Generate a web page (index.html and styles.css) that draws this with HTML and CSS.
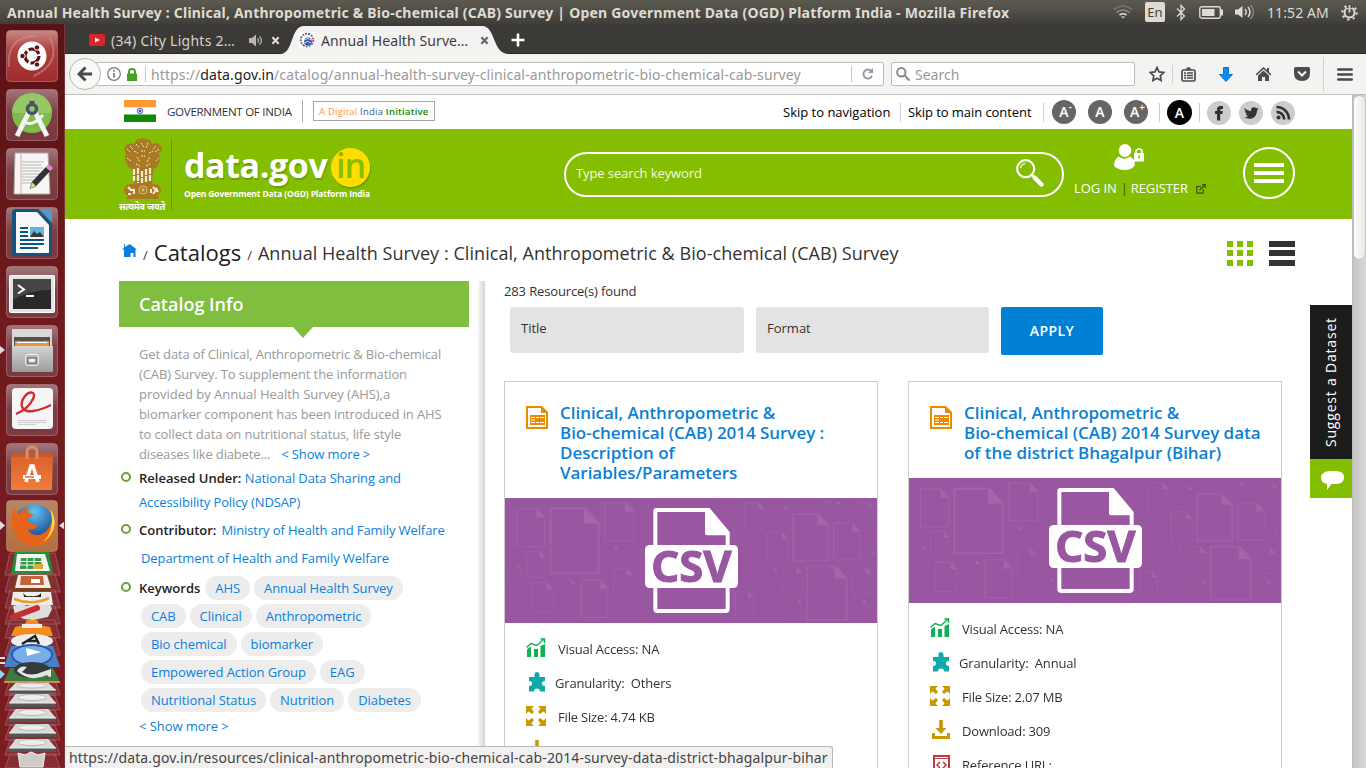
FILE: index.html
```html
<!DOCTYPE html>
<html lang="en">
<head>
<meta charset="utf-8">
<title>Annual Health Survey : Clinical, Anthropometric &amp; Bio-chemical (CAB) Survey</title>
<link rel="stylesheet" href="styles.css">
</head>
<body>
<svg class="defs" width="0" height="0">
  <defs>
    <linearGradient id="tile" x1="0" y1="0" x2="0" y2="1"><stop offset="0" stop-color="#a3777b"/><stop offset=".45" stop-color="#7d3f45"/><stop offset="1" stop-color="#7b3940"/></linearGradient>
    <linearGradient id="red" x1="0" y1="0" x2="0" y2="1"><stop offset="0" stop-color="#c98884"/><stop offset=".4" stop-color="#a9403e"/><stop offset="1" stop-color="#a12b2d"/></linearGradient>
    <linearGradient id="orange" x1="0" y1="0" x2="0" y2="1"><stop offset="0" stop-color="#d9602b"/><stop offset="1" stop-color="#ee7d3c"/></linearGradient>
    <linearGradient id="steel" x1="0" y1="0" x2="0" y2="1"><stop offset="0" stop-color="#d4d4d2"/><stop offset="1" stop-color="#9b9b99"/></linearGradient>
    <linearGradient id="fox" x1="0" y1="0" x2="0" y2="1"><stop offset="0" stop-color="#b98662"/><stop offset="1" stop-color="#b3703f"/></linearGradient>
    <radialGradient id="globe" cx=".5" cy=".2" r=".7"><stop offset="0" stop-color="#63c6f0"/><stop offset="1" stop-color="#153f8c"/></radialGradient>
    <symbol id="sheet" viewBox="0 0 90 120" preserveAspectRatio="none"><path d="M2 2h62l24 26v90H2z" fill="none" stroke="#a76bb0" stroke-width="3"/><path d="M62 2v27h27z" fill="#a76bb0"/></symbol>
    <symbol id="banner" viewBox="45 384 1119 375">
      <g opacity=".8">
      <use href="#sheet" x="78" y="414" width="89" height="119"/><use href="#sheet" x="178" y="412" width="151" height="201"/><use href="#sheet" x="343" y="397" width="91" height="118"/><use href="#sheet" x="346" y="526" width="40" height="52"/><use href="#sheet" x="55" y="583" width="43" height="61"/><use href="#sheet" x="109" y="543" width="58" height="80"/><use href="#sheet" x="124" y="636" width="67" height="91"/><use href="#sheet" x="213" y="628" width="45" height="61"/><use href="#sheet" x="271" y="628" width="85" height="118"/><use href="#sheet" x="370" y="595" width="58" height="82"/><use href="#sheet" x="448" y="682" width="32" height="40"/><use href="#sheet" x="735" y="664" width="56" height="74"/><use href="#sheet" x="763" y="397" width="61" height="85"/><use href="#sheet" x="856" y="405" width="40" height="56"/><use href="#sheet" x="829" y="484" width="67" height="94"/><use href="#sheet" x="907" y="430" width="110" height="145"/><use href="#sheet" x="1012" y="391" width="40" height="55"/><use href="#sheet" x="1104" y="397" width="47" height="64"/><use href="#sheet" x="1030" y="457" width="83" height="115"/><use href="#sheet" x="1123" y="541" width="32" height="43"/><use href="#sheet" x="831" y="591" width="32" height="41"/><use href="#sheet" x="877" y="589" width="61" height="85"/><use href="#sheet" x="948" y="587" width="125" height="165"/><use href="#sheet" x="1086" y="591" width="59" height="80"/><use href="#sheet" x="895" y="687" width="43" height="59"/><use href="#sheet" x="1089" y="687" width="44" height="62"/>
      </g>
      <path d="M499 420h157l57 68v228q0 7-7 7H503q-7 0-7-7V424q0-4 3-4z" fill="#9857a0" stroke="#fff" stroke-width="12"/>
      <path d="M645 416h12l61 72v8h-67q-6 0-6-6z" fill="#fff"/>
      <rect x="465" y="525" width="279" height="129" rx="14" fill="#fff"/>
    </symbol>
    <symbol id="i-doc" viewBox="0 0 22 23"><path d="M1 1h14.500l5.500 5.500V22H1z" fill="#fff" stroke="#ea8a00" stroke-width="2"/><path d="M15 0l7 7h-7zM4 9h15v10H4z" fill="#ea8a00"/><path d="M5 11.500h4M10 11.500h3M14 11.500h4M5 14h4M5 16.500h4M10 16.500h3M14 16.500h4" stroke="#fff"/></symbol>
    <symbol id="i-chart" viewBox="0 0 20 19"><path d="M1 11.500l3-2.500h1v10H1zM8 11h4v8H8zM14.500 8L19 6v13h-4.500z" fill="#11b056"/><path d="M.5 9.500l4.500-4 6 2 6.500-6M14.500 1h4v4" fill="none" stroke="#11b056" stroke-width="1.400"/></symbol>
    <symbol id="i-puzzle" viewBox="0 0 18 20"><path d="M1 5h5.500V2.500a2.500 2.500 0 0 1 5 0V5H17v4.200a2.400 2.400 0 1 0 0 4.600V19.500h-5a3 3 0 1 0-6 0H1v-5.700a2.400 2.400 0 1 0 0-4.600z" fill="#0eaaa9"/></symbol>
    <symbol id="i-expand" viewBox="0 0 20 20"><path d="M0 0h8L5.500 2.500 8 6 6 8 2.500 5.500 0 8zM20 0h-8l2.500 2.500L12 6l2 2 3.500-2.500L20 8zM0 20h8l-2.500-2.500L8 14l-2-2-3.500 2.500L0 12zM20 20h-8l2.500-2.500L12 14l2-2 3.500 2.500L20 12z" fill="#c79a00"/></symbol>
    <symbol id="i-down" viewBox="0 0 18 19"><path d="M7.200 0h3.600v8h3.700L9 14 3.500 8h3.700zM0 13h3v3h12v-3h3v6H0z" fill="#c79a00"/></symbol>
    <symbol id="i-code" viewBox="0 0 17 18"><path d="M1 1h15v16H1z" fill="none" stroke="#b93a3f" stroke-width="2"/><path d="M1 3.500h15" stroke="#b93a3f"/><path d="M7 7l-3 3 3 3M10 7l3 3-3 3" fill="none" stroke="#b93a3f" stroke-width="1.500"/></symbol>
    <symbol id="i-x" viewBox="0 0 10 10"><path d="M1.500 1.500l7 7M8.500 1.500l-7 7" stroke="currentColor" stroke-width="2.400"/></symbol>
    <symbol id="disk" viewBox="0 0 50 15" preserveAspectRatio="none"><path d="M8 1h34l8 9v4H1v-4z" fill="#d9d9d9"/><path d="M1 10h49v4H1z" fill="#555"/><path d="M1 10h49" stroke="#f5f5f5"/><ellipse cx="25" cy="4.500" rx="15" ry="3" fill="#eee" stroke="#b9b9b9"/></symbol>
  </defs>
</svg>

<header class="panel">
  <span class="panel-title">Annual Health Survey : Clinical, Anthropometric &amp; Bio-chemical (CAB) Survey | Open Government Data (OGD) Platform India - Mozilla Firefox</span>
  <div class="tray">
    <svg class="t-wifi" width="20" height="14" viewBox="0 0 20 14" fill="none" stroke-width="1.700"><path d="M.8 4.500q9.200-7 18.400 0" stroke="#77756c"/><path d="M3.500 7.500q6.500-5 13 0" stroke="#8f8d83"/><path d="M6.500 10q3.500-2.500 7 0" stroke="#dfdbd2"/><path d="M8 11.500h4l-2 2z" fill="#dfdbd2"/></svg>
    <span class="t-lang">En</span>
    <svg class="t-bt" width="10" height="17" viewBox="0 0 10 17" fill="none" stroke="#dfdbd2" stroke-width="1.300"><path d="M1 4.500l7.500 7.500L5 15.500V1.500L8.500 5 1 12.500"/></svg>
    <svg class="t-bat" width="25" height="13" viewBox="0 0 25 13"><rect x=".8" y=".8" width="20.500" height="11.400" rx="2" fill="none" stroke="#dfdbd2" stroke-width="1.400"/><path d="M3 3h12.500v7H3zM22 3.500h2v6h-2z" fill="#dfdbd2"/></svg>
    <svg class="t-vol" width="20" height="16" viewBox="0 0 20 16" fill="none"><path d="M0 5.500h3L7.500 2v12L3 10.500H0z" fill="#dfdbd2"/><path d="M10 5q2.500 3 0 6M13 3q4 5 0 10" stroke="#dfdbd2" stroke-width="1.500"/><path d="M15.500 1q6 7 0 14" stroke="#85837a" stroke-width="1.500"/></svg>
    <span class="t-time">11:52 AM</span>
    <svg class="t-gear" width="17" height="17" viewBox="0 0 17 17" fill="none" stroke="#dfdbd2"><circle cx="8.500" cy="8.500" r="5" stroke-width="2"/><circle cx="8.500" cy="8.500" r="7.200" stroke-width="2" stroke-dasharray="2.300 3.350"/><path d="M8.500 0v4" stroke="#4a483f" stroke-width="5"/><path d="M8.500 1v7.500" stroke-width="1.800"/></svg>
  </div>
</header>

<div class="desktop">
<nav class="launcher">
  <svg width="65" height="744" viewBox="0 24 65 744">
    <g stroke="#b98c8f" stroke-opacity=".55">
      <rect x="6.500" y="30.500" width="51" height="51" rx="4" fill="url(#red)"/>
      <g fill="url(#tile)"><rect x="6.500" y="89.500" width="51" height="51" rx="4"/><rect x="6.500" y="148.500" width="51" height="51" rx="4"/><rect x="6.500" y="207.500" width="51" height="51" rx="4"/><rect x="6.500" y="266.500" width="51" height="51" rx="4"/><rect x="6.500" y="325.500" width="51" height="51" rx="4"/><rect x="6.500" y="384.500" width="51" height="51" rx="4"/><rect x="6.500" y="443.500" width="51" height="51" rx="4"/></g>
      <rect x="6.500" y="500.500" width="51" height="51" rx="4" fill="url(#fox)"/>
    </g>
    <!-- Dash -->
    <path d="M9 67Q6 36 37 36M50 38Q62 62 34 76" fill="none" stroke="#d38b89" stroke-width="2" opacity=".6"/>
    <circle cx="32" cy="56" r="14.500" fill="#fff"/><circle cx="32" cy="56" r="7" fill="none" stroke="#5e1216" stroke-width="3.200" stroke-dasharray="12.400 2.260"/><g fill="#5e1216" stroke="#fff"><circle cx="22.500" cy="56" r="2.700"/><circle cx="37" cy="47.500" r="2.700"/><circle cx="37" cy="64.500" r="2.700"/></g>
    <!-- Android Studio -->
    <circle cx="32" cy="113" r="20" fill="#7fba4c"/><path d="M12 113a20 20 0 0 1 40 0z" fill="#93c864"/><path d="M29 112L17 136M35 112l12 24" stroke="#f3f3f3" stroke-width="5"/><path d="M22 121q10 7 21-6" stroke="#f3f3f3" stroke-width="3" fill="none"/><circle cx="32" cy="109" r="4.500" fill="none" stroke="#4c5565" stroke-width="3.500"/><path d="M32 101v5" stroke="#4c5565" stroke-width="5"/>
    <!-- Text editor -->
    <path d="M15 153h33l2 41H14z" fill="#f6f6f4" stroke="#aaa"/><path d="M21 154v40" stroke="#e6a2a2"/><path d="M22 162h22M22 165h20M22 168h21M22 171h18M22 174h21M22 177h15M22 180h14M22 183h10" stroke="#a9aaae" stroke-width=".8"/><path d="M34 184L48 169" stroke="#333" stroke-width="6"/><path d="M48 169l3-3" stroke="#d58bc7" stroke-width="6"/><path d="M36 186l-6 2.500 2-6.500z" fill="#efd779" stroke="#333" stroke-width=".5"/>
    <!-- Writer -->
    <path d="M16 209h22l14 14v30q0 3-3 3H15q-3 0-3-3V213q0-4 4-4z" fill="#14527f"/><path d="M40 209h12v14z" fill="#4b9bcc"/><path d="M16 212h21l12 13v28H16z" fill="#f8f8f8"/><path d="M20 228h8M20 232h8M20 236h8M20 240h24M20 244h24M20 248h18" stroke="#0c5480" stroke-width="2"/><path d="M30 227h14v10H30z" fill="#65b4e0"/><path d="M30 237l4-6 3 3 3-2 4 5z" fill="#3b3b33"/>
    <!-- Terminal -->
    <rect x="9.500" y="275.500" width="45" height="37" rx="1" fill="#e4e4e2" stroke="#fff"/><rect x="13" y="279" width="38" height="30" fill="#292929"/><path d="M13 279h38v11q-19-1-38 10z" fill="#454545"/><path d="M18 285l6 4.500-6 4M26 296h8" fill="none" stroke="#fff" stroke-width="2"/>
    <!-- Files -->
    <path d="M12 329h40v38H12z" fill="#d8d8d6"/><path d="M14 337h36v10H14z" fill="#55514d"/><path d="M15 341h34v6H15z" fill="#e59747"/><path d="M17 342.500h30" stroke="#fff"/><path d="M12 346h41v26H12z" fill="url(#steel)"/><rect x="25.500" y="354.500" width="13" height="11" rx="2" fill="none" stroke="#eee"/><rect x="28" y="358" width="8" height="5" fill="#eee" stroke="#555"/>
    <!-- PDF viewer -->
    <rect x="12" y="388" width="41" height="41" rx="4" fill="#f5f5f5"/><path d="M16 414q12-5 17-15c4-8-4-8-8-3-6 8-4 17 8 15q8-1 18-6" fill="none" stroke="#cf2b31" stroke-width="2.400"/><path d="M18 420.500h28M18 422.500h28M18 424.500h18" stroke="#ccc"/>
    <!-- Software centre -->
    <path d="M11 453h42l-1 37H11z" fill="url(#orange)"/><path d="M11 453h42v4H11z" fill="#cc5625"/><path d="M27 459v-7q0-5 5-5t5 5v7" fill="none" stroke="#e58a5c" stroke-width="3"/><path d="M26 482l5-16h2l5 16" fill="none" stroke="#fff" stroke-width="3.500"/><path d="M23 477h18" stroke="#fff" stroke-width="4"/><path d="M25 477h9" stroke="#e86f35" stroke-width="1.500"/>
    <!-- Firefox -->
    <circle cx="34" cy="524" r="20" fill="url(#globe)"/><path d="M12 514c-3 16 7 32 23 32 14 0 23-12 18-28-3 10-8 17-16 17-6 0-9-4-9-6 5 1 8 0 9-3-3-3-8-1-9-6 0-3 3-3 6-5l-7-3 3-4c-7 0-9 4-11 6-2-1-3-3-3-5-2 1-3 3-4 5z" fill="#e9641b"/><path d="M50 509c9 12 4 27-7 33q13-13 7-33z" fill="#ffd546"/>
    <path d="M0 346l5 4-5 4zM0 521l5 4.500-5 4.500zM65 521l-6 4.500 6 4.500z" fill="#ddd"/>
    <!-- Folded icons -->
    <g fill="#8f3d43" fill-opacity=".55" stroke="#aa686c" stroke-width=".7"><path d="M10 553h45l5 22H5zM10 574h45l5 18H5zM10 590h45l5 18H5zM10 606h45l5 18H5zM10 620h45l5 18H5zM10 638h45l5 17H5zM10 680h45l5 15H5zM10 695h45l5 15H5zM10 710h45l5 15H5zM10 725h45l5 15H5zM10 740h45l5 15H5zM10 754h45l5 14H5z"/></g>
    <path d="M15 552h34l4 22H11z" fill="#1f9136"/><path d="M17 554h28l5 17H15z" fill="#f4f4f4"/><path d="M21 558h20l1 11H20z" fill="#2f9d41"/><path d="M20 561.500h22M20 565h22M27 558v11M34 558v11" stroke="#fff"/><path d="M34 564h9v5h-9z" fill="#e2a73f"/>
    <path d="M16 575h33l4 16H12z" fill="#7d3f1c"/><path d="M18 575h29l4 13H15z" fill="#f1ece6"/><path d="M21 576h22l1 9H20z" fill="#c5623a"/><path d="M31 579h9v4h-9z" fill="#fff"/>
    <path d="M13 592h38l2 13H11z" fill="#eee"/><path d="M23 592q1 5 8 4 7 1 10-3v4H24z" fill="#222"/><path d="M14 599q18 7 35-1" stroke="#f19b2d" stroke-width="2.500" fill="none"/>
    <path d="M13 606l8-2 6 2 8-3 6 2 9-1 2 5-4 8-15 3-9-1-9-4z" fill="#ddd"/><path d="M13 617l24-9" stroke="#c42f36" stroke-width="6" stroke-linecap="round"/>
    <path d="M27 620h10l3 5 10 2 3 9H11l4-9 9-2z" fill="#f58c20"/><path d="M22 624h20v4H22z" fill="#eee"/>
    <ellipse cx="32" cy="641" rx="21" ry="7" fill="#eee"/><path d="M22 644l13-8 4 8M27 641h10" fill="none" stroke="#222" stroke-width="2.500"/>
    <path d="M11 646h42l7 21H4z" fill="#4b7fc3"/><ellipse cx="32" cy="655" rx="20" ry="10" fill="#78aee8" stroke="#2959a7" stroke-width="2"/><path d="M26 648l15 4-14 4z" fill="#fff"/>
    <path d="M10 668h43l7 14H4z" fill="#3f7a3c"/><path d="M4 682h56" stroke="#e6a45e" stroke-width="1.500"/><ellipse cx="32" cy="670" rx="18" ry="8" fill="#353b3b"/><path d="M17 671q3-6 10-4l-5 5q9 5 20 0l9-3v8q-3 0-4-2-17 8-30-4z" fill="#e3e6e5"/><path d="M0 657h5v2H0zM0 662h5v2H0z" fill="#ddd"/><path d="M0 670l5 4-5 5z" fill="#8ed7f4"/>
    <use href="#disk" x="8" y="682" width="48" height="12"/><use href="#disk" x="8" y="693" width="48" height="15"/><use href="#disk" x="8" y="708" width="48" height="15"/><use href="#disk" x="8" y="723" width="48" height="15"/><use href="#disk" x="8" y="738" width="48" height="15"/>
    <path d="M18 753l7 2 6-3 7 3 7-2-2 14H20z" fill="#cecccb" stroke="#eee"/>
  </svg>
</nav>

<div class="browser">
  <div class="tabs">
    <div class="tab tab-back">
      <svg width="16" height="12" viewBox="0 0 16 12"><rect width="16" height="12" rx="2" fill="#d9252a"/><path d="M6 3.500l5 2.500-5 2.500z" fill="#fff"/></svg>
      <span class="tab-label label-city">(34) City Lights 2…</span>
      <svg class="tab-sound" width="14" height="13" viewBox="0 0 14 13" fill="none" stroke="#b8b6af" stroke-width="1.200"><path d="M0 4h3l4-3.500v12L3 9H0z" fill="#b8b6af" stroke="none"/><path d="M8.500 4.500q2 2 0 4M10.500 2.500q4 4 0 8"/></svg>
      <svg class="tab-x" width="9" height="9"><use href="#i-x"/></svg>
    </div>
    <div class="tab tab-active">
      <svg class="tab-shape" width="229" height="30" viewBox="0 0 229 30"><path d="M0 30c14 0 10-28 24-28h178c14 0 10 28 27 28z" fill="#f4f3f1"/></svg>
      <svg class="tab-fav" width="16" height="16" viewBox="0 0 16 16"><rect width="16" height="16" fill="#fff"/><circle cx="9" cy="9.500" r="4" fill="#355c9e"/><path d="M5 8q4-3 8 0M5 11q4-3 7 0" stroke="#cfe0f2" fill="none"/><g fill="none" stroke-width="2"><circle cx="8" cy="8" r="6.300" stroke="#e0348e" stroke-dasharray="2 7"/><circle cx="8" cy="8" r="6.300" stroke="#39aa53" stroke-dasharray="2 7" stroke-dashoffset="3"/><circle cx="8" cy="8" r="6.300" stroke="#2979ba" stroke-dasharray="2 7" stroke-dashoffset="6"/></g></svg>
      <span class="tab-label label-annual">Annual Health Surve…</span>
      <svg class="tab-x" width="9" height="9"><use href="#i-x"/></svg>
    </div>
    <svg class="tab-new" width="14" height="14" viewBox="0 0 14 14"><path d="M7 .5v13M.5 7h13" stroke="#fff" stroke-width="2.600"/></svg>
  </div>

  <div class="toolbar">
    <div class="back"><svg width="16" height="16" viewBox="0 0 16 16" fill="none" stroke="#4a4a4a" stroke-width="3"><path d="M15 8H3M8.500 1.500L2 8l6.500 6.500"/></svg></div>
    <div class="urlbar">
      <svg width="14" height="14" viewBox="0 0 14 14" fill="none" stroke="#777"><circle cx="7" cy="7" r="6.300" stroke-width="1.200"/><path d="M7 6v4.500" stroke-width="1.700"/><path d="M7 3v1.700" stroke-width="1.700"/></svg>
      <svg class="lock" width="10" height="13" viewBox="0 0 10 13"><path d="M0 5.500h10V13H0z" fill="#47a127"/><path d="M2 6V4q0-3 3-3t3 3v2" fill="none" stroke="#47a127" stroke-width="2"/></svg>
      <i class="url-sep"></i>
      <span class="url">https://<b>data.gov.in</b>/catalog/annual-health-survey-clinical-anthropometric-bio-chemical-cab-survey</span>
      <i class="url-sep"></i>
      <svg class="reload" width="12" height="12" viewBox="0 0 12 12" fill="none" stroke="#8f979f" stroke-width="1.900"><path d="M9.500 3.200A4.500 4.500 0 1 0 10 8"/><path d="M11 0v5H6z" fill="#8f979f" stroke="none"/></svg>
    </div>
    <div class="searchbar">
      <svg width="14" height="14" viewBox="0 0 14 14" fill="none" stroke="#8b8b8b" stroke-width="2"><circle cx="5.300" cy="5.300" r="4.200"/><path d="M8.500 8.500l5 5"/></svg>
      <span>Search</span>
    </div>
    <div class="tools">
      <svg width="16" height="16" viewBox="0 0 16 16"><path d="M8 1.500l2 4.400 4.700.6-3.400 3.300.8 4.700L8 12.200l-4.100 2.300.8-4.700L1.300 6.500 6 5.900z" fill="none" stroke="#4c4c4c" stroke-width="1.700"/></svg>
      <i class="tool-sep"></i>
      <svg width="15" height="15" viewBox="0 0 15 15" fill="none" stroke="#4c4c4c"><rect x="1" y="3" width="13" height="11" rx="1.500" stroke-width="1.700"/><path d="M5 2.500L7.500 0 10 2.500z" fill="#4c4c4c"/><path d="M3 6h2M6 6h6M3 8.500h2M6 8.500h6M3 11h2M6 11h6" stroke-width="1.300"/></svg>
      <svg class="g1" width="14" height="15" viewBox="0 0 14 15"><path d="M4.500.5h5v7h4L7 14.500.5 7.500h4z" fill="#0d8df5" stroke="#0a72d0"/></svg>
      <svg class="g2" width="15" height="15" viewBox="0 0 15 15"><path d="M0 8l7.500-7L15 8" fill="none" stroke="#4c4c4c" stroke-width="1.600"/><path d="M7.500 3.500L13 8.500V14H9v-4H6v4H2V8.500zM11 1h2v4h-2z" fill="#4c4c4c"/></svg>
      <svg class="g2" width="16" height="14" viewBox="0 0 16 14"><path d="M1.500 0h13Q16 0 16 1.500V6q0 8-8 8T0 6V1.500Q0 0 1.500 0z" fill="#4c4c4c"/><path d="M4 4.500l4 4 4-4" fill="none" stroke="#f4f3f1" stroke-width="2"/></svg>
      <i class="tool-sep tall"></i>
      <svg class="g3" width="16" height="13" viewBox="0 0 16 13"><path d="M1.300 1.500h13.400M1.300 6.500h13.400M1.300 11.500h13.400" stroke="#4a4a4a" stroke-width="2.600" stroke-linecap="round"/></svg>
    </div>
  </div>

  <div class="viewport">
  <div class="page">
    <div class="util">
      <svg class="flag" width="32" height="22" viewBox="0 0 32 22"><path d="M0 0h32v7.500H0z" fill="#ff9933"/><path d="M0 7.500h32v7H0z" fill="#fff"/><path d="M0 14.500h32V22H0z" fill="#128807"/><circle cx="16" cy="11" r="2.800" fill="#c6c7ee" stroke="#4a4fb6" stroke-width=".8"/><circle cx="16" cy="11" r="1" fill="#22228c"/></svg>
      <span class="goi">GOVERNMENT OF INDIA</span>
      <span class="digital"><em>A Digital</em> <em>India</em> <em>Initiative</em></span>
      <span class="skip skip-nav">Skip to navigation</span>
      <span class="skip skip-main">Skip to main content</span>
      <span class="size">A<sup>-</sup></span>
      <span class="size">A</span>
      <span class="size">A<sup>+</sup></span>
      <span class="contrast"><span>A</span></span>
      <span class="social"><svg width="24" height="24" viewBox="0 0 24 24"><path d="M10 19.500V13H8v-3h2V8.500Q10 5 13.500 5H16v3h-1.500q-1.300 0-1.300 1.300V10h2.600l-.4 3h-2.200v6.500z" fill="#333"/></svg></span>
      <span class="social"><svg width="24" height="24" viewBox="0 0 24 24"><path d="M5.500 7q3 3.200 6.500 3.200Q11.700 6.500 15 6.300q1.500 0 2.300 1l2-.7-1.200 1.700 1.400-.4-1.500 1.500C18 14 15 17.700 10.500 17.700Q7.500 17.700 5.500 16.300q2.200 0 3.800-1.200-2-.2-2.500-2l1.300-.1Q6 12 5.800 10l1.300.4Q4.800 9 5.500 7z" fill="#333"/></svg></span>
      <span class="social"><svg width="24" height="24" viewBox="0 0 24 24" fill="none" stroke="#333" stroke-width="2.700"><circle cx="7.500" cy="16.500" r="2" fill="#333" stroke="none"/><path d="M5.500 10.800a7.700 7.700 0 0 1 7.700 7.700M5.500 6a12.500 12.500 0 0 1 12.500 12.500"/></svg></span>
    </div>

    <div class="masthead">
      <div class="emblem">
        <svg width="42" height="62" viewBox="0 0 42 62" fill="#a97a22"><path d="M14 2l7-2 7 2 2 4 6-1 4 5-1 4-2 1 1 8-4 7-3 1-1 7H11l-1-7-3-1-4-7 1-8-2-3 2-5 6-2 2 1z"/><path d="M11 30h20l-1 16H12z"/><rect x="2" y="46" width="37" height="12" rx="6"/><path d="M6 57h29l2 4H4z"/><g stroke="#f3ecd2" fill="none"><path d="M12 31v12M16 30v15M20 33v12M24 31v13M28 30v14" stroke-width="2.200" stroke-dasharray="6 1"/><path d="M14 6l3 3m2-4l3 4m4-4l-2 5M5 11l3 3m25 0l4-3M12 13l4 2m11 0l4-2M5 20l4 3m6-4l3 5m7 0l3-5m6 4l3-3M14 26l4 2m6 0l4-2M8 8l3 3m20 0l3-3M19 13h4M19 18h4" stroke-dasharray="2 1"/><path d="M6 49l3 3h3v4M6 56h3M31 49l3 3-3 4M29 51v4M34 50l2 4" stroke-width="2"/><circle cx="21" cy="52" r="4" stroke-opacity=".6"/><path d="M19 52h4M21 50v4" stroke-opacity=".6"/></g></svg>
        <span lang="hi">सत्यमेव जयते</span>
      </div>
      <div class="brand">
        <div class="brand-name"><span class="brand-data">data.gov</span><span class="brand-in"><span>in</span></span></div>
        <div class="brand-sub">Open Government Data (OGD) Platform India</div>
      </div>
      <div class="search">
        <span>Type search keyword</span>
        <svg width="28" height="28" viewBox="0 0 28 28" fill="none" stroke="#fff"><circle cx="9.700" cy="9.700" r="8.500" stroke-width="2.200"/><path d="M4.500 9q1-4 5-4.500" stroke-width="1.200"/><path d="M16 16l3 3" stroke-width="2.500"/><path d="M19 19l6.500 6.500" stroke-width="4.500" stroke-linecap="round"/></svg>
      </div>
      <div class="account">
        <svg width="30" height="27" viewBox="0 0 30 27" fill="#fff"><ellipse cx="11" cy="6.500" rx="6.300" ry="6.500"/><path d="M0 22q0-7 5-9.500 5.500 4.500 11 0 5 2.500 5 8.500Q18 26 11 26T0 22z"/><path d="M20 9h10v8.500H20z"/><path d="M22 10V7.500Q22 5 25 5t3 2.500V10" fill="none" stroke="#fff" stroke-width="1.700"/><path d="M25 11.500v3" stroke="#84be00" stroke-width="1.500"/></svg>
        <div class="account-links"><span>LOG IN</span><i>|</i><span>REGISTER</span><svg width="10" height="10" viewBox="0 0 10 10" fill="none" stroke="#3f5206" stroke-width="1.200"><path d="M5 2.500H.8v6.700h6.400V5.500M3.500 6L9 1M6 .7h3.300V4"/></svg></div>
      </div>
      <div class="menu"><i></i><i></i><i></i></div>
    </div>

    <div class="crumbs">
      <svg class="home" width="15" height="14" viewBox="0 0 15 14"><path d="M7.500 0L15 5.500h-1.500V13h-2V9h-3v4H2V5.500H0L2 4V0h1v3z" fill="#0b7fdb"/></svg>
      <i>/</i><span class="crumb-cat">Catalogs</span><i>/</i><span class="crumb-name">Annual Health Survey : Clinical, Anthropometric &amp; Bio-chemical (CAB) Survey</span>
      <div class="views">
        <svg width="26" height="26" viewBox="0 0 26 26" fill="#84be00"><path d="M0 0h6v6H0zM10 0h6v6h-6zM20 0h6v6h-6zM0 9h6v6H0zM10 9h6v6h-6zM20 9h6v6h-6zM0 19h6v6H0zM10 19h6v6h-6zM20 19h6v6h-6z"/></svg>
        <svg width="26" height="26" viewBox="0 0 26 26" fill="#333"><path d="M0 0h26v6H0zM0 9h26v6H0zM0 19h26v6H0z"/></svg>
      </div>
    </div>

    <div class="columns">
      <aside class="side">
        <h2>Catalog Info</h2>
        <p class="about"><span class="tight">Get data of Clinical, Anthropometric &amp; Bio-chemical</span><br>(CAB) Survey. To supplement the information<br><span class="loose">provided by Annual Health Survey (AHS),a</span><br>biomarker component has been introduced in AHS<br>to collect data on nutritional status, life style<br><span class="tight">diseases like diabete...</span><a class="more">&lt; Show more &gt;</a></p>
        <ul class="facts">
          <li class="released"><b>Released Under:</b> <a>National Data Sharing and<br>Accessibility Policy (NDSAP)</a></li>
          <li class="contrib"><b>Contributor:</b><a>Ministry of Health and Family Welfare</a><br><a class="dept">Department of Health and Family Welfare</a></li>
          <li class="keys">
            <div class="pills"><b>Keywords</b><a>AHS</a><a>Annual Health Survey</a></div>
            <div class="pills"><a>CAB</a><a>Clinical</a><a>Anthropometric</a></div>
            <div class="pills"><a>Bio chemical</a><a>biomarker</a></div>
            <div class="pills"><a>Empowered Action Group</a><a>EAG</a></div>
            <div class="pills"><a>Nutritional Status</a><a>Nutrition</a><a>Diabetes</a></div>
            <a class="all">&lt; Show more &gt;</a>
          </li>
        </ul>
      </aside>
      <div class="divider"></div>
      <main class="results">
        <div class="count">283 Resource(s) found</div>
        <div class="filters"><span class="field">Title</span><span class="field field-format">Format</span><span class="apply">APPLY</span></div>
        <div class="cards">
          <article class="card">
            <div class="card-head"><svg width="22" height="23"><use href="#i-doc"/></svg><h3>Clinical, Anthropometric &amp;<br>Bio-chemical (CAB) 2014 Survey :<br>Description of<br>Variables/Parameters</h3></div>
            <svg class="banner" width="372" height="125" viewBox="45 384 1116 375"><use href="#banner" x="45" y="384" width="1119" height="375"/><text x="484" y="636" textLength="241" lengthAdjust="spacingAndGlyphs">CSV</text></svg>
            <div class="stats">
              <div class="stat"><svg width="20" height="19"><use href="#i-chart"/></svg><span>Visual Access: NA</span></div>
              <div class="stat gran"><svg width="18" height="20"><use href="#i-puzzle"/></svg><span>Granularity:&nbsp; Others</span></div>
              <div class="stat"><svg width="20" height="20"><use href="#i-expand"/></svg><span>File Size: 4.74 KB</span></div>
              <div class="stat"><svg width="18" height="19"><use href="#i-down"/></svg></div>
            </div>
          </article>
          <article class="card">
            <div class="card-head"><svg width="22" height="23"><use href="#i-doc"/></svg><h3>Clinical, Anthropometric &amp;<br>Bio-chemical (CAB) 2014 Survey data<br>of the district Bhagalpur (Bihar)</h3></div>
            <svg class="banner" width="372" height="125" viewBox="45 384 1116 375"><use href="#banner" x="45" y="384" width="1119" height="375"/><text x="484" y="636" textLength="241" lengthAdjust="spacingAndGlyphs">CSV</text></svg>
            <div class="stats">
              <div class="stat"><svg width="20" height="19"><use href="#i-chart"/></svg><span>Visual Access: NA</span></div>
              <div class="stat gran"><svg width="18" height="20"><use href="#i-puzzle"/></svg><span>Granularity:&nbsp; Annual</span></div>
              <div class="stat"><svg width="20" height="20"><use href="#i-expand"/></svg><span>File Size: 2.07 MB</span></div>
              <div class="stat"><svg width="18" height="19"><use href="#i-down"/></svg><span>Download: 309</span></div>
              <div class="stat"><svg width="17" height="18"><use href="#i-code"/></svg><span>Reference URL:</span></div>
            </div>
          </article>
        </div>
      </main>
    </div>
    <div class="suggest">
      <div class="suggest-label">Suggest a Dataset</div>
      <div class="suggest-chat"><svg width="23" height="20" viewBox="0 0 23 20"><path d="M8 0h7q8 0 8 6.500T15 13h-4.500L6 19v-6Q0 12 0 6.500T8 0z" fill="#fff"/></svg></div>
    </div>
    <div class="status">https://data.gov.in/resources/clinical-anthropometric-bio-chemical-cab-2014-survey-data-district-bhagalpur-bihar</div>
  </div>
  <div class="scroll"><i></i></div>
  </div>
</div>
</div>
</body>
</html>
```

FILE: styles.css
```css
* { box-sizing: border-box; }
body { margin: 0; width: 1366px; height: 768px; overflow: hidden; font-family: "Open Sans", "Noto Sans", sans-serif; font-size: 13px; color: #333; }
svg { display: block; flex: none; }
i, em { font-style: normal; }
.defs { position: absolute; }

/* Desktop panel */
.panel { height: 24px; display: flex; justify-content: space-between; align-items: center; padding-left: 7px; background: linear-gradient(#5c5a50, #403e39); color: #dfdbd2; font-family: "Noto Sans", sans-serif; white-space: nowrap; }
.panel-title { font-weight: 700; font-size: 14px; letter-spacing: .21px; }
.tray { display: flex; align-items: center; width: 253px; height: 24px; font-size: 14px; }
.tray > * { flex: none; }
.t-lang { margin-left: 12px; width: 20px; height: 20px; line-height: 20px; border-radius: 2px; background: #dfdbd2; color: #45433c; text-align: center; font-size: 13px; }
.t-bt { margin-left: 11px; }
.t-bat { margin-left: 13px; }
.t-vol { margin-left: 11px; }
.t-time { margin-left: 12px; width: 62px; letter-spacing: .1px; }
.t-gear { margin-left: 12px; }

.desktop { display: flex; height: 744px; }
.launcher { width: 65px; background: linear-gradient(#5a1216, #701a1e 40%, #7b1d21); border-right: 1px solid #80353a; overflow: hidden; }
.browser { width: 1301px; }

/* Tabs */
.tabs { height: 30px; background: #3c3a36; border-bottom: 1px solid #282724; display: flex; font-family: "Noto Sans", sans-serif; font-size: 14px; }
.tab { display: flex; align-items: center; white-space: nowrap; height: 32px; }
.tab-back { width: 215px; padding-left: 24px; color: #d6d3cb; }
.tab-label { margin-left: 6px; }
.label-city { width: 126px; letter-spacing: .27px; }
.tab-sound { margin-left: 12px; }
.tab-back .tab-x { margin-left: 8px; color: #e0ddd6; }
.tab-active { position: relative; width: 229px; padding-left: 19px; color: #3c3c3c; }
.tab-active > * { position: relative; }
.tab-active .tab-shape { position: absolute; left: 0; top: 0; }
.label-annual { width: 148px; letter-spacing: .1px; }
.tab-active .tab-x { margin-left: 11px; color: #666; }
.tab-new { margin: 9px 0 0 2px; }

/* Toolbar */
.toolbar { height: 41px; background: #f4f3f1; border-bottom: 1px solid #c1bfbb; display: flex; align-items: center; font-family: "Noto Sans", sans-serif; font-size: 14px; color: #999; white-space: nowrap; }
.back { position: relative; z-index: 1; width: 32px; height: 32px; margin-left: 4px; border: 1px solid #b9b7b3; border-radius: 50%; background: #faf9f8; display: flex; align-items: center; justify-content: center; }
.urlbar, .searchbar { height: 24px; border: 1px solid #bdbbb7; background: #fff; display: flex; align-items: center; }
.urlbar { width: 788px; margin-left: -5px; padding-left: 10px; border-radius: 0 2px 2px 0; }
.lock { margin-left: 6px; }
.url-sep { width: 1px; height: 16px; margin-left: 8px; background: #c8c8c8; }
.url { margin-left: 5px; width: 692px; letter-spacing: .12px; }
.url b { font-weight: 400; color: #222; }
.reload { margin-left: 10px; }
.searchbar { width: 244px; margin-left: 7px; padding-left: 4px; border-radius: 2px; }
.searchbar span { margin-left: 5px; }
.tools { display: flex; align-items: center; margin-left: 14px; }
.tool-sep { width: 1px; height: 18px; background: #d2d0cc; margin: 0 8px 0 7px; }
.tool-sep.tall { height: 35px; margin: 0 13px 0 13px; }
.g1 { margin-left: 23px; }
.g2 { margin-left: 23px; }

/* Page */
.viewport { display: flex; height: 673px; }
.page { position: relative; width: 1287px; height: 673px; overflow: hidden; background: #fff; }
.scroll { width: 14px; background: linear-gradient(90deg, #c6c6c5, #d9d8d7); border-left: 1px solid #bcbab7; }
.scroll i { display: block; height: 165px; border: 1px solid #c4c2be; border-radius: 7px; background: linear-gradient(90deg, #fdfdfd, #e9e8e6); }

.util { height: 34px; padding-left: 59px; display: flex; align-items: flex-start; white-space: nowrap; }
.flag { margin-top: 5px; }
.goi { margin: 5px 0 0 11px; width: 136px; height: 22px; line-height: 24px; border-right: 1px solid #aaa; font-size: 11.5px; letter-spacing: -.26px; }
.digital { margin: 6px 0 0 10px; width: 122px; height: 20px; line-height: 19px; padding-left: 5px; border: 1px solid #a5a5a5; font-size: 9.5px; letter-spacing: .22px; color: #36578c; }
.digital em:first-child { color: #f93; }
.digital em:last-child { color: #128807; font-weight: 600; }
.skip { height: 19px; margin-top: 8px; line-height: 19px; border-right: 1px solid #ccc; color: #000; }
.skip-nav { margin-left: 348px; width: 118px; }
.skip-main { margin-left: 7px; width: 136px; letter-spacing: -.07px; }
.size { margin: 5px 12px 0 0; width: 24px; height: 24px; border-radius: 50%; background: #666; color: #fff; display: flex; justify-content: center; line-height: 24px; font-size: 14px; font-weight: 600; }
.skip-main + .size { margin-left: 8px; }
.size sup { font-size: 10px; line-height: 14px; margin-right: -3px; }
.contrast { margin: 5px 7px 0 -1px; width: 41px; height: 26px; padding-left: 8px; background: linear-gradient(#ccc, #ccc) 0 3px / 1px 19px no-repeat, linear-gradient(#ccc, #ccc) 40px 3px / 1px 19px no-repeat; }
.contrast span { display: block; width: 25px; height: 25px; border-radius: 50%; background: #000; color: #fff; text-align: center; line-height: 25px; font-size: 14px; font-weight: 600; }
.social { margin: 6px 8px 0 0; width: 24px; height: 24px; border-radius: 50%; background: #ccc; }

.masthead { height: 90px; padding-left: 54px; background: #84be00; display: flex; color: #fff; white-space: nowrap; }
.emblem { margin-top: 9px; width: 53px; height: 73px; padding-left: 3px; border-right: 1px solid #6a9a08; }
.emblem span { display: block; margin: 2px 0 0 -3px; font: 700 9px/12px "Noto Sans Devanagari", "Noto Sans", "Open Sans", sans-serif; letter-spacing: -.1px; }
.brand { margin-left: 12px; width: 380px; padding-top: 18px; }
.brand-name { display: flex; height: 41px; }
.brand-data { width: 147px; font-size: 34px; font-weight: 700; line-height: 37px; letter-spacing: -.4px; text-shadow: 1px 2px 1px #6ea000; }
.brand-in { width: 39px; height: 39px; margin-top: 1px; border-radius: 50%; background: #ffdd00; color: #84be00; font-size: 34px; font-weight: 600; text-align: center; line-height: 35px; letter-spacing: -1px; box-shadow: 1px 2px 1px #6ea000; }
.brand-sub { font-size: 8.5px; font-weight: 700; line-height: 11px; letter-spacing: -.13px; }
.search { margin-top: 23px; width: 500px; height: 45px; border: 2px solid #fff; border-radius: 23px; display: flex; align-items: center; justify-content: space-between; padding: 0 18px 4px 10px; color: #f3f9e0; letter-spacing: -.1px; }
.account { margin: 15px 0 0 10px; width: 169px; }
.account > svg { margin-left: 40px; }
.account-links { display: flex; align-items: center; margin-top: 8px; line-height: 19px; letter-spacing: -.08px; }
.account-links i { margin: 0 3px 0 4px; color: #3f5206; }
.account-links svg { margin-left: 8px; }
.menu { margin-top: 18px; width: 52px; height: 52px; border: 2px solid #fff; border-radius: 50%; display: flex; flex-direction: column; gap: 4px; align-items: center; justify-content: center; }
.menu i { width: 30px; height: 4px; background: #fff; }

.crumbs { height: 62px; padding: 22px 57px 0 57px; display: flex; align-items: flex-start; line-height: 24px; white-space: nowrap; }
.home { margin-top: 3px; }
.crumbs i { margin: 2px 6px 0; }
.crumb-cat { font-size: 22px; line-height: 22px; color: #222; }
.crumb-name { font-size: 18px; letter-spacing: .055px; }
.views { display: flex; gap: 16px; margin-left: auto; }

.columns { display: flex; padding-left: 54px; }
.side { width: 350px; }
.side h2 { position: relative; margin: 0; height: 46px; padding-left: 20px; background: #80be40; color: #fff; font-size: 18px; font-weight: 600; line-height: 46px; }
.side h2::after { content: ""; position: absolute; left: 174px; top: 46px; border: solid transparent; border-width: 11px 10px 0; border-top-color: #80be40; }
.side a { color: #0b7fdb; }
.about { margin: 17px 0 0 20px; color: #999; line-height: 20px; letter-spacing: -.11px; white-space: nowrap; }
.about .tight { letter-spacing: -.16px; }
.about .loose { letter-spacing: -.02px; }
.about .more { margin-left: 11px; }
.facts { list-style: none; margin: 2px 0 0; padding: 0; line-height: 24px; letter-spacing: -.07px; white-space: nowrap; }
.facts li { position: relative; padding-left: 20px; }
.facts li::before { content: ""; position: absolute; left: 2px; top: 6px; width: 6px; height: 6px; border: 2px solid #6fa135; border-radius: 50%; }
.facts b { color: #222; font-weight: 600; letter-spacing: 0; }
.released b + a { letter-spacing: -.11px; }
.facts .released { margin-bottom: 2px; }
.facts .contrib { line-height: 28px; margin-bottom: 4px; letter-spacing: -.1px; }
.facts .contrib::before { top: 8px; }
.contrib b { margin-right: 5px; }
.dept { margin-left: 2px; }
.pills { display: flex; gap: 4px; margin-bottom: 4px; padding-left: 2px; }
.pills b { margin: 0 1px 0 -2px; }
.pills a { height: 24px; padding: 0 10px; border-radius: 12px; background: #ededed; }
.all { display: block; margin-top: -2px; }
.divider { width: 8px; height: 500px; margin-left: 8px; background: linear-gradient(90deg, #fff, #d3d3d3); }
.results { margin-left: 19px; width: 800px; }
.count { height: 26px; line-height: 20px; letter-spacing: -.13px; }
.filters { display: flex; padding-left: 6px; height: 74px; }
.field { width: 234px; height: 46px; margin-right: 12px; padding-left: 11px; line-height: 43px; background: #e3e3e3; border-radius: 3px; }
.field-format { width: 233px; }
.apply { width: 102px; height: 48px; line-height: 48px; border-radius: 2px; background: #0080d5; color: #fff; text-align: center; font-size: 14px; font-weight: 600; letter-spacing: .4px; }
.cards { display: flex; align-items: flex-start; gap: 30px; }
.card { width: 374px; height: 460px; border: 1px solid #ccc; padding-top: 21px; }
.card-head { display: flex; padding: 0 0 15px 21px; }
.card-head svg { margin-top: 3px; }
.card h3 { margin: 0 0 0 12px; color: #0b7fd3; font-size: 17px; font-weight: 600; line-height: 20px; letter-spacing: -.04px; white-space: nowrap; }
.banner { background: #9857a0; overflow: hidden; }
.banner text { font: 700 129px "Noto Sans", "Open Sans", sans-serif; fill: #9857a0; stroke: #9857a0; stroke-width: 3px; }
.stats { padding: 9px 0 0 21px; }
.stat { display: flex; align-items: center; height: 34px; letter-spacing: -.18px; }
.stat svg { margin-top: -3px; }
.stat span { position: absolute; margin-left: 32px; white-space: nowrap; }
.stat svg[width="18"] { margin-left: 2px; }
.stat svg[width="17"] { margin-left: 3px; }
.stat.gran span { margin-left: 29px; }

.suggest { position: absolute; right: 0; top: 210px; width: 42px; }
.suggest-label { height: 154px; background: #1c1c1c; color: #fff; writing-mode: vertical-rl; transform: rotate(180deg); line-height: 42px; text-align: center; font-size: 14px; letter-spacing: .8px; }
.suggest-chat { height: 39px; background: #84be00; padding: 12px 0 0 11px; }
.status { position: absolute; left: 0; bottom: 0; width: 768px; height: 22px; padding-left: 4px; border: solid #bbb9b5; border-width: 1px 1px 0 0; border-radius: 0 3px 0 0; background: #f2f1f0; color: #444; font: 14px/22px "Noto Sans", sans-serif; letter-spacing: .145px; white-space: nowrap; overflow: hidden; }
```
